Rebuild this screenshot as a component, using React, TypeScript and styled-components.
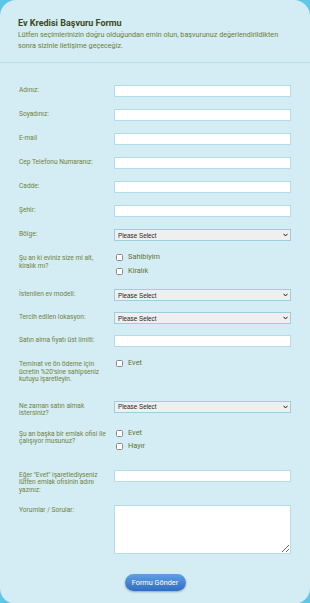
import React from "react";
import styled, { createGlobalStyle } from "styled-components";

const GlobalStyle = createGlobalStyle`
  html, body {
    margin: 0;
    padding: 0;
    background: #5ec7e7;
    font-family: Roboto, "Liberation Sans", sans-serif;
  }
  * { box-sizing: border-box; }
`;

const Card = styled.div`
  background: #d4ecf3;
  border-radius: 16px;
  min-height: 603px;
  width: 310px;
  overflow: hidden;
`;

const Header = styled.header`
  padding: 18px 18px 11px;
  border-bottom: 1px solid #b3dfee;
`;

const Title = styled.h1`
  margin: 0;
  font-size: 9px;
  line-height: 11px;
  font-weight: 700;
  color: #3b4920;
`;

const Subtitle = styled.p`
  margin: 0;
  font-size: 7.2px;
  line-height: 11px;
  font-weight: 400;
  color: #6d7f35;
`;

const Form = styled.form`
  padding: 22px 19px 13px;
  display: flex;
  flex-direction: column;
`;

const Row = styled.div<{ $gap?: number }>`
  display: grid;
  grid-template-columns: 95px 177px;
  align-items: start;
  margin-bottom: ${({ $gap }) => ($gap ?? 12)}px;
`;

const Label = styled.label`
  display: block;
  width: 90px;
  padding-top: 2px;
  font-size: 6.6px;
  line-height: 7.5px;
  color: #718340;
`;

const TextInput = styled.input`
  display: block;
  width: 100%;
  height: 12px;
  margin: 0;
  padding: 0 3px;
  border: 1px solid #b4ddec;
  background: #fff;
  font-size: 7px;
  outline: none;
`;

const SelectWrap = styled.div`
  position: relative;
  height: 12px;
`;

const Select = styled.select`
  appearance: none;
  display: block;
  width: 100%;
  height: 12px;
  margin: 0;
  padding: 0 3px;
  border: 1px solid #9fcde0;
  border-radius: 0;
  background: #efefef;
  font-family: "Liberation Sans", Arial, sans-serif;
  font-size: 6.3px;
  color: #262626;
  outline: none;
`;

const Chevron = styled.svg`
  position: absolute;
  right: 3px;
  top: 4px;
  width: 5px;
  height: 4px;
  pointer-events: none;
`;

const TextArea = styled.textarea`
  display: block;
  width: 100%;
  height: 49px;
  margin: 0;
  padding: 3px;
  border: 1px solid #b4ddec;
  background: #fff;
  font-size: 7px;
  outline: none;
`;

const Checks = styled.div`
  display: flex;
  flex-direction: column;
`;

const CheckItem = styled.label`
  display: flex;
  align-items: flex-start;
  height: 13.5px;
  padding-left: 2px;
  font-size: 7.4px;
  line-height: 8px;
  color: #63742f;
`;

const Box = styled.span`
  width: 7px;
  height: 7px;
  margin: 1px 5px 0 0;
  border: 1px solid #8a8a8a;
  border-radius: 1.5px;
  background: #fff;
  flex: none;
`;

const ButtonRow = styled.div`
  display: flex;
  justify-content: center;
`;

const Submit = styled.button`
  width: 61px;
  height: 17px;
  padding: 0;
  border: none;
  border-radius: 9px;
  background: linear-gradient(#5fa0e6, #2f6dc2);
  box-shadow: 0 1px 2px rgba(0, 0, 0, 0.3);
  font-family: Roboto, sans-serif;
  font-size: 7.3px;
  color: #fff;
`;

function Dropdown() {
  return (
    <SelectWrap>
      <Select defaultValue="">
        <option value="">Please Select</option>
      </Select>
      <Chevron viewBox="0 0 10 8">
        <path d="M1 1.5 L5 6 L9 1.5" fill="none" stroke="#222" strokeWidth="2" />
      </Chevron>
    </SelectWrap>
  );
}

function Check({ text }: { text: string }) {
  return (
    <CheckItem>
      <Box />
      {text}
    </CheckItem>
  );
}

const textRows = ["Adınız:", "Soyadınız:", "E-mail", "Cep Telefonu Numaranız:", "Cadde:", "Şehir:"];

export default function App() {
  return (
    <>
      <GlobalStyle />
      <Card>
        <Header>
          <Title>Ev Kredisi Başvuru Formu</Title>
          <Subtitle>
            Lütfen seçimlerinizin doğru olduğundan emin olun, başvurunuz değerlendirildikten sonra sizinle
            iletişime geçeceğiz.
          </Subtitle>
        </Header>
        <Form onSubmit={(e) => e.preventDefault()}>
          {textRows.map((t) => (
            <Row key={t}>
              <Label>{t}</Label>
              <TextInput type="text" />
            </Row>
          ))}
          <Row>
            <Label>Bölge:</Label>
            <Dropdown />
          </Row>
          <Row $gap={9}>
            <Label>Şu an ki eviniz size mi ait, kiralık mı?</Label>
            <Checks>
              <Check text="Sahibiyim" />
              <Check text="Kiralık" />
            </Checks>
          </Row>
          <Row $gap={11}>
            <Label>İstenilen ev modeli:</Label>
            <Dropdown />
          </Row>
          <Row $gap={11}>
            <Label>Tercih edilen lokasyon:</Label>
            <Dropdown />
          </Row>
          <Row>
            <Label>Satın alma fiyatı üst limiti:</Label>
            <TextInput type="text" />
          </Row>
          <Row $gap={17}>
            <Label>Teminat ve ön ödeme için ücretin %20'sine sahipseniz kutuyu işaretleyin.</Label>
            <Checks>
              <Check text="Evet" />
            </Checks>
          </Row>
          <Row $gap={11}>
            <Label>Ne zaman satın almak istersiniz?</Label>
            <Dropdown />
          </Row>
          <Row $gap={14}>
            <Label>Şu an başka bir emlak ofisi ile çalışıyor musunuz?</Label>
            <Checks>
              <Check text="Evet" />
              <Check text="Hayır" />
            </Checks>
          </Row>
          <Row $gap={11}>
            <Label>Eğer "Evet" işaretlediyseniz lütfen emlak ofisinin adını yazınız:</Label>
            <TextInput type="text" />
          </Row>
          <Row $gap={20}>
            <Label>Yorumlar / Sorular:</Label>
            <TextArea />
          </Row>
          <ButtonRow>
            <Submit type="submit">Formu Gönder</Submit>
          </ButtonRow>
        </Form>
      </Card>
    </>
  );
}
